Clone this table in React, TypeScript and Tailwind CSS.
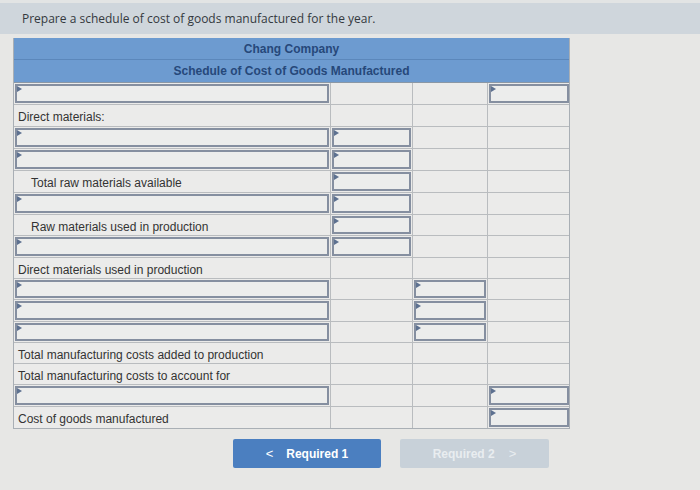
import React from "react";

const rows: { h: number; label?: string; indent?: boolean; inp: number[] }[] = [
  { h: 22, inp: [0, 3] },
  { h: 22, label: "Direct materials:", inp: [] },
  { h: 22, inp: [0, 1] },
  { h: 22, inp: [0, 1] },
  { h: 22, label: "Total raw materials available", indent: true, inp: [1] },
  { h: 22, inp: [0, 1] },
  { h: 21, label: "Raw materials used in production", indent: true, inp: [1] },
  { h: 22, inp: [0, 1] },
  { h: 21, label: "Direct materials used in production", inp: [] },
  { h: 21, inp: [0, 2] },
  { h: 22, inp: [0, 2] },
  { h: 21, inp: [0, 2] },
  { h: 21, label: "Total manufacturing costs added to production", inp: [] },
  { h: 21, label: "Total manufacturing costs to account for", inp: [] },
  { h: 22, inp: [0, 3] },
  { h: 21, label: "Cost of goods manufactured", inp: [3] },
];

const widths = ["w-[317px]", "w-[82px]", "w-[75px]", "w-[82px]"];

function InputBox() {
  return (
    <div className="relative h-full w-full border-2 border-[#858fa0] bg-[#ecedec]">
      <div className="absolute left-0 top-0 w-0 h-0 border-t-[3px] border-b-[3px] border-l-[5px] border-t-transparent border-b-transparent border-l-[#5d7190]" />
    </div>
  );
}

export default function App() {
  return (
    <div
      className="w-[700px] h-[490px] bg-[#e7e7e5] overflow-hidden relative"
      style={{ fontFamily: '"Liberation Sans", Arial, sans-serif' }}
    >
      <div className="h-[3px] bg-[#e2e4e4]" />
      <div className="h-[31px] bg-[#cfd6dc] flex items-center pl-[22px]">
        <span
          className="text-[12px] text-[#34393e]"
          style={{ fontFamily: '"Open Sans", "DejaVu Sans", sans-serif' }}
        >
          Prepare a schedule of cost of goods manufactured for the year.
        </span>
      </div>
      <div className="ml-[13px] mt-[4px] w-[557px] border border-[#a9afb5] border-t-0">
        <div className="bg-[#6d9bd0] text-[#26487a] font-bold text-[12px]">
          <div className="h-[22px] flex items-center justify-center border-b border-[#5b87bb]">
            Chang Company
          </div>
          <div className="h-[23px] flex items-center justify-center border-b border-[#8a97a5]">
            Schedule of Cost of Goods Manufactured
          </div>
        </div>
        {rows.map((r, i) => (
          <div
            key={i}
            className={`flex bg-[#ebebea] ${i < rows.length - 1 ? "border-b border-[#b9bcbf]" : ""}`}
            style={{ height: r.h }}
          >
            {[0, 1, 2, 3].map((c) => (
              <div
                key={c}
                className={`${widths[c]} h-full shrink-0 ${c < 3 ? "border-r border-[#b9bcbf]" : ""} p-[1px]`}
              >
                {r.inp.includes(c) ? (
                  <InputBox />
                ) : c === 0 && r.label ? (
                  <div
                    className={`h-full flex items-center pt-[3px] text-[12px] text-[#333] ${r.indent ? "pl-[16px]" : "pl-[3px]"}`}
                  >
                    {r.label}
                  </div>
                ) : null}
              </div>
            ))}
          </div>
        ))}
      </div>
      <div className="flex mt-[10px]">
        <div className="ml-[233px] w-[148px] h-[29px] rounded-[2px] bg-[#4b7fc0] flex items-center justify-center gap-[13px] text-white font-bold text-[12px]">
          <span className="text-[13px] font-normal">&lt;</span>
          <span>Required 1</span>
        </div>
        <div className="ml-[19px] w-[149px] h-[29px] rounded-[2px] bg-[#c8d1d9] flex items-center justify-center gap-[14px] text-[#e9edf0] font-bold text-[12px]">
          <span>Required 2</span>
          <span className="text-[13px] font-normal">&gt;</span>
        </div>
      </div>
    </div>
  );
}
